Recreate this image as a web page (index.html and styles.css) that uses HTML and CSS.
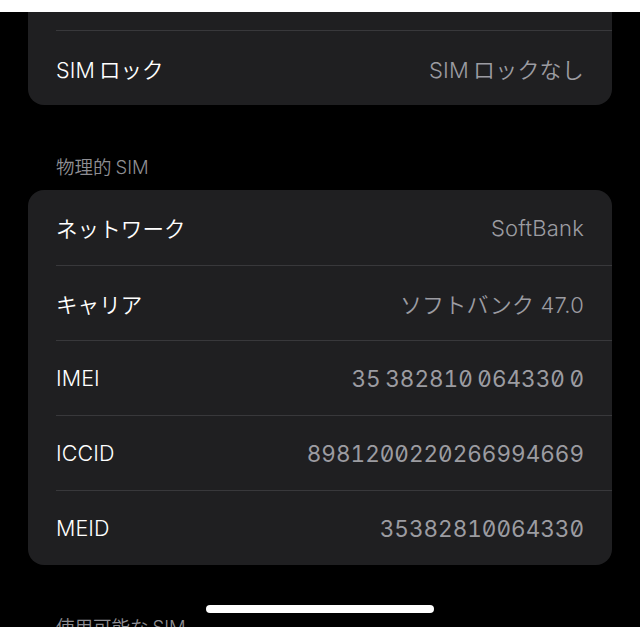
FILE: index.html
```html
<!DOCTYPE html>
<html lang="ja">
<head>
<meta charset="utf-8">
<title>SIM情報</title>
<link rel="stylesheet" href="styles.css">
</head>
<body>
<div class="screen">
  <div class="card card-cut">
    <div class="row"></div>
    <div class="row"><span class="label"><span class="latin">SIM</span>ロック</span><span class="value"><span class="latin">SIM</span>ロックなし</span></div>
  </div>

  <div class="section-header">物理的<span class="latin-after">SIM</span></div>
  <div class="card">
    <div class="row"><span class="label">ネットワーク</span><span class="value">SoftBank</span></div>
    <div class="row"><span class="label">キャリア</span><span class="value">ソフトバンク 47.0</span></div>
    <div class="row"><span class="label">IMEI</span><span class="value num imei">35 382810 064330 0</span></div>
    <div class="row"><span class="label">ICCID</span><span class="value num">8981200220266994669</span></div>
    <div class="row"><span class="label">MEID</span><span class="value num">35382810064330</span></div>
  </div>

  <div class="section-header">使用可能な<span class="latin-after">SIM</span></div>

  <div class="home-indicator"></div>
</div>
</body>
</html>
```
FILE: styles.css
```css
html, body {
  margin: 0;
  padding: 0;
  background: #ffffff;
}

body {
  padding-top: 12px;
  font-family: "Inter", "Noto Sans CJK JP", sans-serif;
  font-weight: 350;
}

.screen {
  position: relative;
  height: 615px;
  background: #000000;
  overflow: hidden;
  display: flex;
  flex-direction: column;
}

.card {
  margin: 0 28px;
  background: #1f1f21;
  border-radius: 16px;
  flex: none;
}

.card-cut {
  margin-top: -57px;
}

.row {
  box-sizing: border-box;
  height: 75px;
  margin-left: 28px;
  padding-right: 28px;
  border-top: 1px solid #38383b;
  display: flex;
  align-items: center;
  justify-content: space-between;
}

.row:first-child {
  border-top: none;
}

.label {
  color: #ffffff;
  font-size: 21.5px;
  letter-spacing: 0.1px;
}

.value {
  color: #9c9ca1;
  font-size: 22px;
  letter-spacing: 0.2px;
}

.latin {
  margin-right: 4px;
}

.latin-after {
  margin-left: 4px;
}

.num {
  font-feature-settings: "tnum" 1, "zero" 1;
  font-size: 22.5px;
  font-weight: 400;
  letter-spacing: 0px;
}

.imei {
  word-spacing: -1.5px;
}

.section-header {
  flex: none;
  margin: 51px 0 12px;
  padding-left: 56px;
  color: #8e8e93;
  font-size: 18.5px;
  line-height: 22px;
}

.home-indicator {
  position: absolute;
  left: 206px;
  top: 593px;
  width: 228px;
  height: 8px;
  border-radius: 4px;
  background: #ffffff;
}
```
